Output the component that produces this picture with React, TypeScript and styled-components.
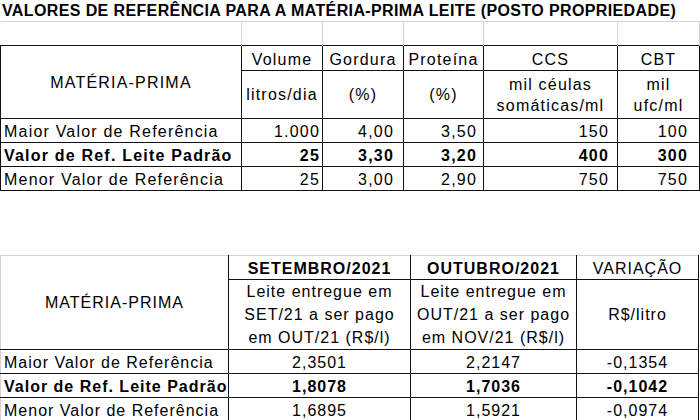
import React from "react";
import styled, { createGlobalStyle } from "styled-components";

const LINE = "#111";
const GRID = "#d4d4d4";

const GlobalStyle = createGlobalStyle`
  html, body {
    margin: 0;
    padding: 0;
    background: #fff;
  }
  body {
    font-family: "Liberation Sans", Arial, sans-serif;
    color: #000;
    overflow: hidden;
  }
`;

type Align = "left" | "right" | "center";

const topCols = [241, 81, 81, 80, 134, 82];
const topPad = [3, 2, 9, 6, 8, 11];
const topRows = [
  { label: "Maior Valor de Referência", values: ["1.000", "4,00", "3,50", "150", "100"] },
  { label: "Valor de Ref. Leite Padrão", values: ["25", "3,30", "3,20", "400", "300"], bold: true },
  { label: "Menor Valor de Referência", values: ["25", "3,00", "2,90", "750", "750"] },
];

const bottomCols = [228, 182, 166, 122];
const bottomRows = [
  { label: "Maior Valor de Referência", values: ["2,3501", "2,2147", "-0,1354"] },
  { label: "Valor de Ref. Leite Padrão", values: ["1,8078", "1,7036", "-0,1042"], bold: true },
  { label: "Menor Valor de Referência", values: ["1,6895", "1,5921", "-0,0974"] },
];

export default function App() {
  return (
    <Page>
      <GlobalStyle />
      <Title>VALORES DE REFERÊNCIA PARA A MATÉRIA-PRIMA LEITE (POSTO PROPRIEDADE)</Title>

      <Sheet $width={700}>
        <colgroup>
          {topCols.map((w, i) => (
            <col key={i} style={{ width: w }} />
          ))}
        </colgroup>
        <tbody>
          <SpacerRow>
            {topCols.map((_, i) => (
              <SpacerCell key={i} />
            ))}
          </SpacerRow>
          <Row $h={25}>
            <Cell rowSpan={2} $align="center" $valign="middle">
              MATÉRIA-PRIMA
            </Cell>
            <Cell $align="center">Volume</Cell>
            <Cell $align="center">Gordura</Cell>
            <Cell $align="center">Proteína</Cell>
            <Cell $align="center">CCS</Cell>
            <Cell $align="center">CBT</Cell>
          </Row>
          <Row $h={48}>
            <Cell $align="center" $valign="middle">litros/dia</Cell>
            <Cell $align="center" $valign="middle">(%)</Cell>
            <Cell $align="center" $valign="middle">(%)</Cell>
            <Cell $align="center" $valign="middle">
              mil céulas
              <br />
              somáticas/ml
            </Cell>
            <Cell $align="center" $valign="middle">
              mil
              <br />
              ufc/ml
            </Cell>
          </Row>
          {topRows.map((r) => (
            <Row key={r.label} $h={24}>
              <Cell $align="left" $bold={r.bold}>{r.label}</Cell>
              {r.values.map((v, i) => (
                <Cell key={i} $align="right" $bold={r.bold} $pad={topPad[i + 1]}>
                  {v}
                </Cell>
              ))}
            </Row>
          ))}
        </tbody>
      </Sheet>

      <Sheet $width={699} $gap={64}>
        <colgroup>
          {bottomCols.map((w, i) => (
            <col key={i} style={{ width: w }} />
          ))}
        </colgroup>
        <tbody>
          <Row $h={24}>
            <Cell rowSpan={2} $align="center" $valign="middle" $soft $spacing={1}>
              MATÉRIA-PRIMA
            </Cell>
            <Cell $align="center" $bold $softTop $spacing={1}>SETEMBRO/2021</Cell>
            <Cell $align="center" $bold $softTop $spacing={1}>OUTUBRO/2021</Cell>
            <Cell $align="center" $softTop $spacing={1}>VARIAÇÃO</Cell>
          </Row>
          <Row $h={69}>
            <Cell $align="center" $valign="middle" $lh={23} $spacing={1}>
              Leite entregue em
              <br />
              SET/21 a ser pago
              <br />
              em OUT/21 (R$/l)
            </Cell>
            <Cell $align="center" $valign="middle" $lh={23} $spacing={1}>
              Leite entregue em
              <br />
              OUT/21 a ser pago
              <br />
              em NOV/21 (R$/l)
            </Cell>
            <Cell $align="center" $valign="middle" $spacing={1}>R$/litro</Cell>
          </Row>
          {bottomRows.map((r) => (
            <Row key={r.label} $h={24}>
              <Cell $align="left" $bold={r.bold} $softLeft $spacing={1}>{r.label}</Cell>
              {r.values.map((v, i) => (
                <Cell key={i} $align="center" $bold={r.bold} $spacing={1}>
                  {v}
                </Cell>
              ))}
            </Row>
          ))}
        </tbody>
      </Sheet>
    </Page>
  );
}

const Page = styled.div`
  display: flex;
  flex-direction: column;
  width: 700px;
  height: 420px;
  overflow: hidden;
  background: #fff;
`;

const Title = styled.div`
  height: 21px;
  line-height: 21px;
  padding-left: 2px;
  font-size: 16px;
  font-weight: 700;
  letter-spacing: 0.38px;
  white-space: nowrap;
`;

const Sheet = styled.table<{ $width: number; $gap?: number }>`
  width: ${({ $width }) => $width}px;
  margin-top: ${({ $gap }) => $gap ?? 0}px;
  border-collapse: collapse;
  table-layout: fixed;
  flex-shrink: 0;
`;

const SpacerRow = styled.tr`
  height: 24px;
`;

const SpacerCell = styled.td`
  padding: 0;
  border-top: 1px solid ${GRID};
  border-right: 1px solid ${GRID};
`;

const Row = styled.tr<{ $h: number }>`
  height: ${({ $h }) => $h}px;
`;

const Cell = styled.td<{
  $align: Align;
  $valign?: "bottom" | "middle";
  $bold?: boolean;
  $pad?: number;
  $lh?: number;
  $spacing?: number;
  $soft?: boolean;
  $softTop?: boolean;
  $softLeft?: boolean;
}>`
  border: 1px solid ${LINE};
  ${({ $soft, $softTop }) => ($soft || $softTop ? `border-top-color: ${GRID};` : "")}
  ${({ $soft, $softLeft }) => ($soft || $softLeft ? `border-left-color: ${GRID};` : "")}
  padding: 0 ${({ $pad }) => $pad ?? 3}px 0 3px;
  text-align: ${({ $align }) => $align};
  vertical-align: ${({ $valign }) => $valign ?? "bottom"};
  font-size: 16px;
  line-height: ${({ $lh }) => $lh ?? 21}px;
  letter-spacing: ${({ $spacing }) => $spacing ?? 1.2}px;
  font-weight: ${({ $bold }) => ($bold ? 700 : 400)};
  white-space: nowrap;
  overflow: hidden;
`;
